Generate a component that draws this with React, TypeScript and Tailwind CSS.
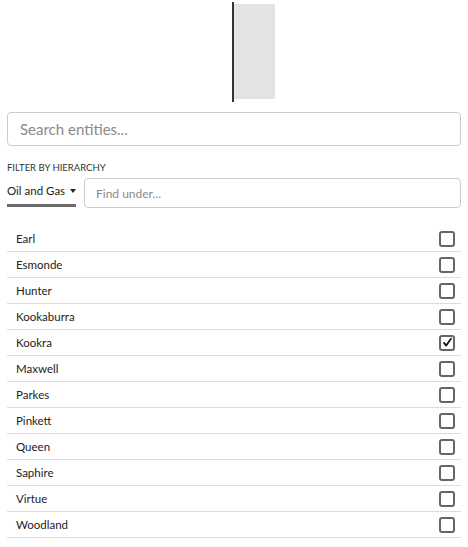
import { useState } from "react";

const entities = [
  "Earl",
  "Esmonde",
  "Hunter",
  "Kookaburra",
  "Kookra",
  "Maxwell",
  "Parkes",
  "Pinkett",
  "Queen",
  "Saphire",
  "Virtue",
  "Woodland",
];

function Checkbox({ checked, onClick }: { checked: boolean; onClick: () => void }) {
  return (
    <button
      type="button"
      onClick={onClick}
      className="w-[16px] h-[16px] border-2 border-[#666] rounded-[3px] flex items-center justify-center bg-white"
    >
      {checked && (
        <svg viewBox="0 0 12 12" className="w-[11px] h-[11px]">
          <path d="M2.2 6.4 L4.6 9.4 L9.8 1.8" fill="none" stroke="#111" strokeWidth="1.9" strokeLinecap="round" strokeLinejoin="round" />
        </svg>
      )}
    </button>
  );
}

export default function App() {
  const [selected, setSelected] = useState<string[]>(["Kookra"]);

  // টগল সিলেকশন
  const toggle = (name: string) =>
    setSelected((s) => (s.includes(name) ? s.filter((n) => n !== name) : [...s, name]));

  return (
    <div className="w-full min-h-screen bg-white px-[7px] pb-4 font-['Lato','Noto_Sans',sans-serif] text-[#222]">
      {/* preview splitter */}
      <div className="flex items-start pt-[2px] pl-[225px]">
        <div className="w-[2px] h-[100px] bg-[#333]" />
        <div className="w-[41px] h-[95px] mt-[2px] bg-[#e3e3e3]" />
      </div>

      <input
        placeholder="Search entities..."
        className="mt-[10px] w-full h-[34px] border border-[#ccc] rounded-[4px] px-[12px] text-[15px] text-[#333] placeholder:text-[#8a8a8a] outline-none"
      />

      <div className="mt-[16px] text-[9.5px] leading-[12px] uppercase text-[#333] whitespace-nowrap">
        Filter by hierarchy
      </div>

      <div className="mt-[4px] flex items-stretch gap-[8px]">
        <button className="w-[69px] shrink-0 flex flex-col justify-end">
          <div className="flex items-center gap-[5px] text-[11.5px] leading-[14px] text-[#222] mb-[6px] whitespace-nowrap">
            <span>Oil and Gas</span>
            <svg viewBox="0 0 6 4" className="w-[6px] h-[4px] shrink-0">
              <path d="M0 0 H6 L3 4 Z" fill="#222" />
            </svg>
          </div>
          <div className="h-[3px] bg-[#6b6b6b] mb-[1px]" />
        </button>
        <input
          placeholder="Find under..."
          className="flex-1 min-w-0 h-[30px] border border-[#ccc] rounded-[4px] px-[11px] text-[12px] text-[#333] placeholder:text-[#8a8a8a] outline-none"
        />
      </div>

      <ul className="mt-[18px]">
        {entities.map((name) => (
          <li
            key={name}
            className="h-[26px] border-b border-[#ddd] flex items-center justify-between pl-[9px] pr-[6px]"
          >
            <span className="text-[11.5px] text-[#222]">{name}</span>
            <Checkbox checked={selected.includes(name)} onClick={() => toggle(name)} />
          </li>
        ))}
      </ul>
    </div>
  );
}
